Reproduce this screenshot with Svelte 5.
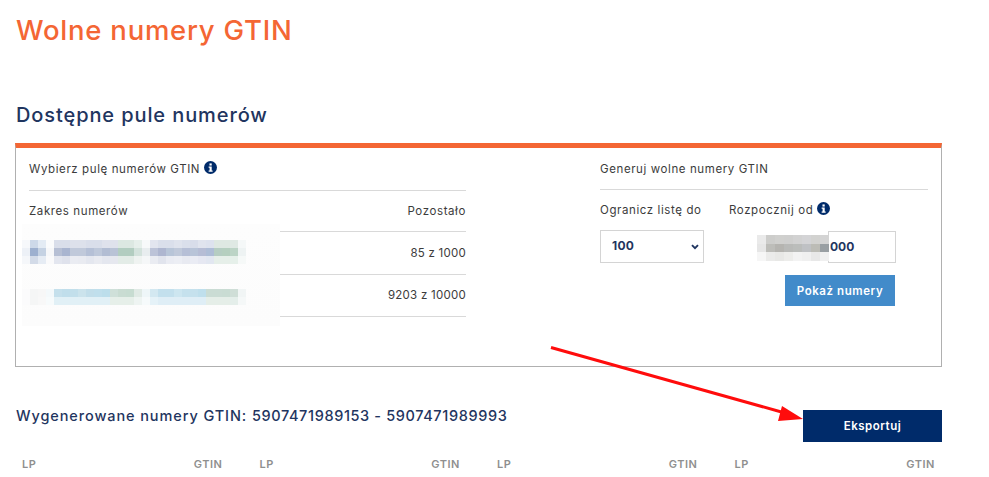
<script lang="ts">
	// run-length rows for the blurred ranges: [colour, number of 8px cells]
	type Run = [string, number];
	const expand = (runs: Run[]) => runs.flatMap(([c, n]) => Array(n).fill(c));

	const blurTop: string[][] = [
		["#f6f8fb","#cdd9e9","#e3ebf4","#fafbfc","#d9deea","#d9deea","#dde1eb","#dde1eb","#d9deea","#d9deea","#dfe2ec","#dfe2ec","#dce8e2","#dce8e2","#e6efeb","#f7f9fa","#e2e5ef","#dadfeb","#dadfeb","#dfe3ed","#dadfeb","#d8ddea","#e0e4ee","#dde2ee","#dee8e2","#dee8e2","#dfe9e4","#f5f8f8"],
		["#edf1f7","#9db0cf","#c5d2e3","#f6f7f9","#b6bfd4","#a9b5d0","#c0c9da","#c0c9da","#b5c0d6","#bec8da","#b2bdd3","#b9c3d6","#b2cdc0","#b2cdc0","#d3e2dc","#e8edef","#bcc3d8","#aeb6d0","#b8c5d8","#c0c9da","#b6bfd6","#b8c4d8","#b6bdd5","#aebdd6","#b5cdc2","#b5cfbf","#bcd4c6","#eef3f3"],
		["#f5f7fa","#d3dbe8","#e6ecf4","#fafafb","#e3e6ef","#dfe2ec","#eaecf2","#e9ebf1","#e4e7ef","#e9ebf1","#e4e7ef","#e6e8ef","#e3ece7","#e3ece7","#eff3f1","#f5f7f8","#eaecf2","#e1e4ed","#eaecf3","#eceef4","#e8eaf1","#eaecf4","#e6e8f2","#e2e7f1","#e6efe9","#e6efe9","#e6f0ea","#f6f9f8"],
	];
	const blurBottom: string[][] = [
		["#fbfbfc","#f5f6f6","#f7f7f7","#f4f9fb","#c5e0ec","#c0deeb","#c2dfeb","#cbe3ec","#c2deea","#c0dfec","#bcdeeb","#cfe0d9","#c9dcd2","#c7dcd1","#e0eae5","#eef6f8","#d3e8f1","#c3e0ed","#c3e0ed","#cde6f0","#c5e1ed","#c5e1ed","#bfdfec","#cadcd4","#cadcd4","#c9dcd3","#cfded7","#f1f5f5"],
		expand([["#fbfbfc",1],["#f5f6f6",1],["#f8f8f8",1],["#f7fbfc",1],["#e1f0f6",7],["#e6efe9",3],["#eef4f2",1],["#f6fafb",1],["#e5f2f8",1],["#dfeef6",6],["#e5eee8",3],["#e4eeea",1],["#f5f8f8",1]]),
	];
	const blurStart: string[][] = [
		["#eaeaea","#cdcdcb","#d0d0ce","#cfcfce","#d2d2d2","#d4d4d6","#d2d2d0","#d4d4d4"],
		["#e6e6e6","#bdbdb9","#b5b4b0","#b9bab8","#bbbdbb","#bfc1c4","#bcbcb6","#999fa3"],
		["#f6f6f6","#ebebea","#e8e8e6","#ededeb","#f3f3f3","#f0f0f0","#e8e8e8","#f0f0f0"],
	];

	const pools = [{ left: "85 z 1000" }, { left: "9203 z 10000" }];
	const columns = [1, 2, 3, 4];
</script>

{#snippet info()}
	<svg class="info" viewBox="0 0 14 14" width="13" height="13" aria-hidden="true">
		<circle cx="7" cy="7" r="7" fill="#002b6a" />
		<rect x="5.9" y="2.6" width="2.4" height="2.3" fill="#fff" />
		<path d="M5 6h3.3v4.2h1v1.3H5v-1.3h1V7.3H5z" fill="#fff" />
	</svg>
{/snippet}

{#snippet mosaic(rows: string[][])}
	{#each rows as row}
		<div class="cells">
			{#each row as c}<i style="background:{c}"></i>{/each}
		</div>
	{/each}
{/snippet}

<div class="page">
	<h1>Wolne numery GTIN</h1>
	<h2>Dostępne pule numerów</h2>

	<section class="card">
		<div class="left">
			<div class="head">Wybierz pulę numerów GTIN {@render info()}</div>
			<div class="tr th"><span>Zakres numerów</span><span>Pozostało</span></div>
			{#each pools as p}
				<div class="tr"><span></span><span class="num">{p.left}</span></div>
			{/each}
			<div class="blur">
				<div class="b1">{@render mosaic(blurTop)}</div>
				<div class="b2">{@render mosaic(blurBottom)}</div>
			</div>
		</div>

		<div class="right">
			<div class="head">Generuj wolne numery GTIN</div>
			<div class="form">
				<div class="limit">
					<label for="limit">Ogranicz listę do</label>
					<div class="selectbox">
						<select id="limit"><option>100</option></select>
						<svg viewBox="0 0 8 6" width="8" height="6" aria-hidden="true">
							<path d="M1 1.2l3 3 3-3" fill="none" stroke="#1f3560" stroke-width="1.9" />
						</svg>
					</div>
				</div>
				<div class="start">
					<label for="start">Rozpocznij od {@render info()}</label>
					<div class="startrow">
						<div class="blur3">{@render mosaic(blurStart)}</div>
						<input id="start" value="000" />
					</div>
					<button class="show">Pokaż numery</button>
				</div>
			</div>
		</div>
	</section>

	<div class="result">
		<h3>Wygenerowane numery GTIN: <span>5907471989153 - 5907471989993</span></h3>
		<button class="export">Eksportuj</button>
	</div>

	<div class="cols">
		{#each columns as _}
			<div class="col"><span>LP</span><span>GTIN</span></div>
		{/each}
	</div>

	<svg class="arrow" width="989" height="477" aria-hidden="true">
		<line x1="551" y1="347.5" x2="785" y2="413" stroke="#ff0c0c" stroke-width="3" />
		<polygon points="803,419 778,421 782,406" fill="#ff0c0c" />
	</svg>
</div>

<style>
	:global(body) {
		margin: 0;
		background: #fff;
		overflow: hidden;
	}
	.page {
		position: relative;
		width: 989px;
		height: 477px;
		overflow: hidden;
		box-sizing: border-box;
		padding: 0 47px 0 16px;
		font-family: Inter, "Open Sans", sans-serif;
		color: #3c3c3c;
		font-size: 11.5px;
		letter-spacing: 0.6px;
	}
	h1 {
		margin: 0;
		padding-top: 14px;
		font-size: 27.5px;
		line-height: 32px;
		font-weight: 500;
		letter-spacing: 0.76px;
		color: #f46634;
	}
	h2 {
		margin: 53px 0 0;
		font-size: 20px;
		line-height: 32px;
		font-weight: 500;
		letter-spacing: 0.9px;
		color: #1f3560;
	}
	.card {
		position: relative;
		display: flex;
		justify-content: space-between;
		box-sizing: border-box;
		height: 224px;
		margin: 12px 0 0 -1px;
		border: 1px solid #b0b0b0;
		border-top: 5px solid #f46634;
		padding: 0 13px;
	}
	.left {
		width: 437px;
	}
	.right {
		width: 328px;
	}
	.head {
		display: flex;
		align-items: center;
		gap: 4px;
		height: 42px;
		box-sizing: border-box;
		border-bottom: 1px solid #d9d9d9;
	}
	.left .head {
		height: 43px;
	}
	.info {
		margin-top: -3px;
		flex: none;
	}
	.tr {
		display: flex;
		justify-content: space-between;
		align-items: center;
		height: 42.5px;
		box-sizing: border-box;
		border-bottom: 1px solid #d9d9d9;
	}
	.th {
		height: 41px;
	}
	.num {
		letter-spacing: 0.25px;
	}
	.blur {
		position: absolute;
		left: 6px;
		top: 76px;
		width: 258px;
		height: 102px;
		background: linear-gradient(#fdfdfd, #fcfcfc);
	}
	.b1 {
		position: absolute;
		left: 0;
		top: 16px;
	}
	.b2 {
		position: absolute;
		left: 0;
		top: 65px;
	}
	.cells {
		display: flex;
		height: 8px;
	}
	.cells i {
		display: block;
		flex: none;
		width: 8px;
		height: 8px;
	}
	.form {
		display: flex;
		margin-top: 11px;
	}
	.limit {
		width: 129px;
	}
	label {
		display: flex;
		align-items: center;
		gap: 4px;
		height: 18px;
	}
	.selectbox {
		position: relative;
		width: 104px;
		margin-top: 11px;
	}
	.selectbox svg {
		position: absolute;
		right: 5px;
		top: 14px;
	}
	select {
		display: block;
		appearance: none;
		width: 104px;
		height: 33px;
		box-sizing: border-box;
		padding: 0 0 2px 11px;
		background: #fff;
		border: 1px solid #d4d4d4;
		border-radius: 0;
		font: 700 12px Inter, sans-serif;
		letter-spacing: 0.3px;
		color: #1f3560;
	}
	.start {
		position: relative;
		width: 167px;
	}
	.startrow {
		display: flex;
		justify-content: flex-end;
		margin-top: 12px;
	}
	.blur3 {
		position: absolute;
		left: 28px;
		top: 34px;
	}
	.blur3 :global(.cells) {
		height: 8.5px;
	}
	.blur3 :global(.cells i) {
		width: 9px;
		height: 8.5px;
	}
	input {
		width: 68px;
		height: 32px;
		box-sizing: border-box;
		margin-right: 0;
		padding: 0 0 1px 1px;
		border: 1px solid #d4d4d4;
		background: #fff;
		font: 700 12px Inter, sans-serif;
		letter-spacing: 0;
		color: #1f3560;
		outline: none;
	}
	.show {
		display: block;
		width: 110px;
		height: 31px;
		margin: 12px 0 0 56px;
		border: 0;
		background: #428bca;
		color: #fff;
		font: 600 11.5px Inter, sans-serif;
		letter-spacing: 0.57px;
	}
	.result {
		display: flex;
		align-items: center;
		justify-content: space-between;
		margin-top: 43px;
		height: 32px;
	}
	h3 {
		margin: -21px 0 0;
		font-size: 14.5px;
		font-weight: 500;
		letter-spacing: 0.9px;
		color: #1f3560;
	}
	h3 span {
		letter-spacing: 0.62px;
	}
	.export {
		width: 139px;
		height: 32px;
		border: 0;
		background: #002b6a;
		color: #fff;
		font: 600 11.5px Inter, sans-serif;
		letter-spacing: 0.5px;
	}
	.cols {
		display: grid;
		grid-template-columns: repeat(4, 1fr);
		gap: 24px;
		margin-top: 15px;
	}
	.col {
		display: flex;
		justify-content: space-between;
		padding: 0 7px 0 6px;
		font-size: 11px;
		line-height: 14px;
		font-weight: 600;
		letter-spacing: 0.55px;
		color: #8f8f8f;
	}
	.arrow {
		position: absolute;
		left: 0;
		top: 0;
		pointer-events: none;
	}
</style>
